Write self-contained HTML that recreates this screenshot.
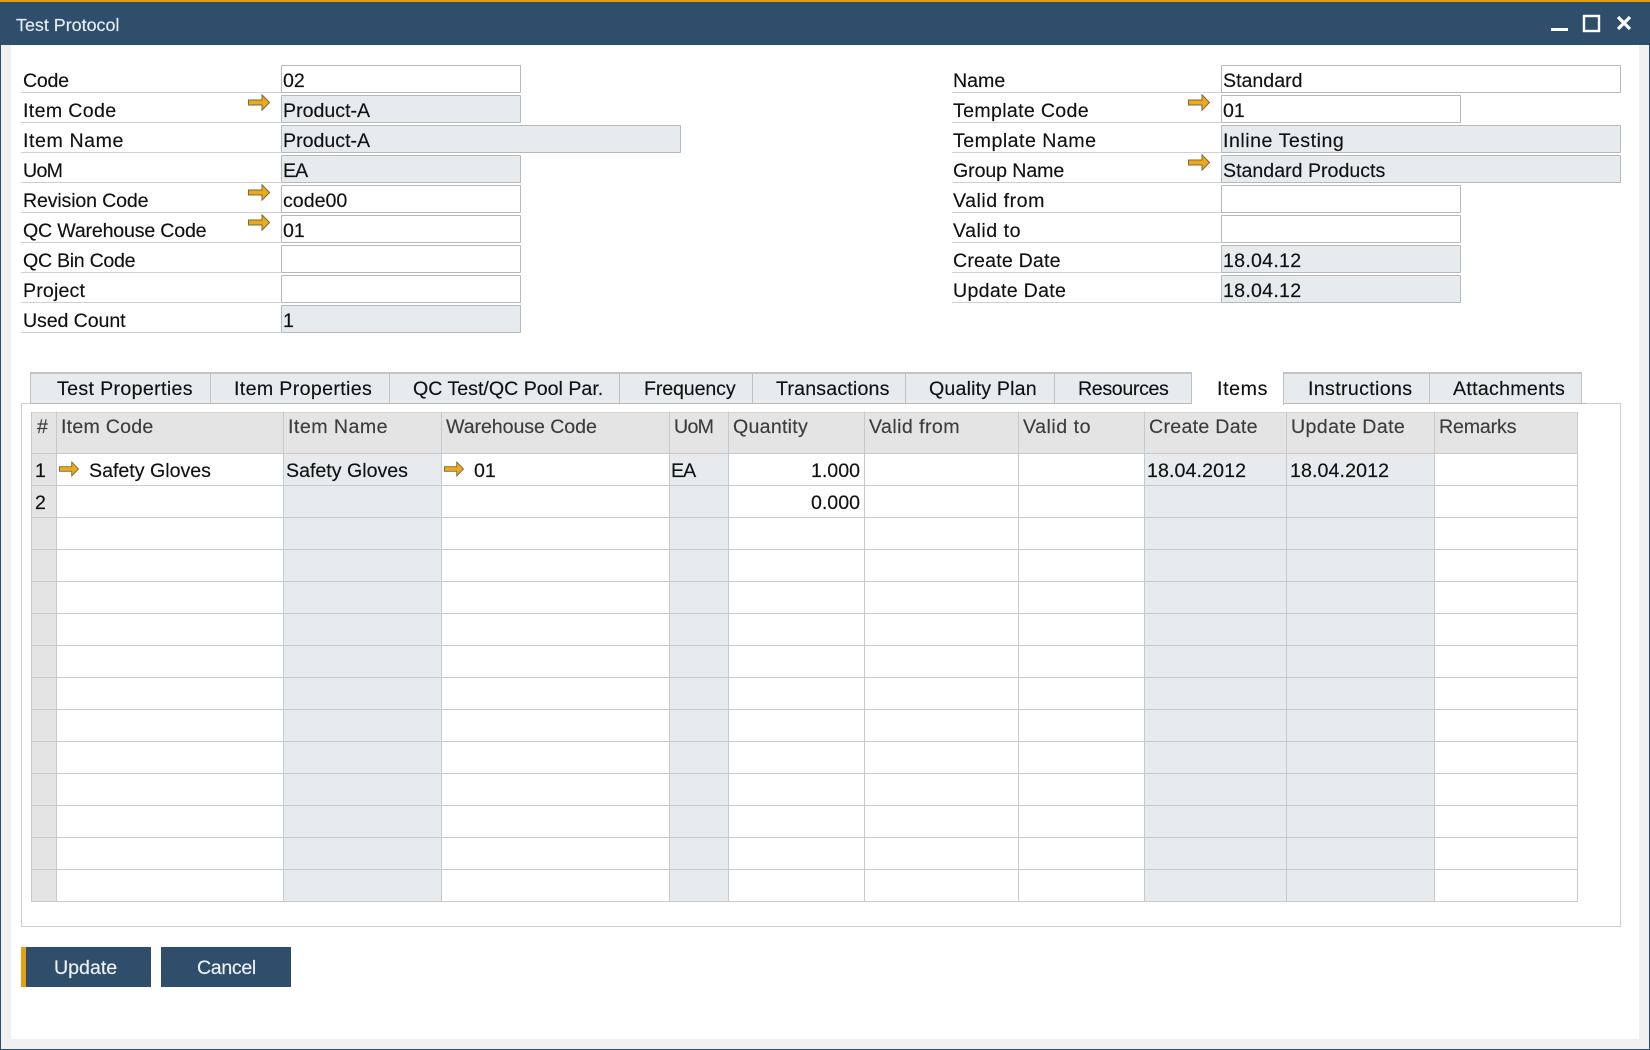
<!DOCTYPE html>
<html><head><meta charset="utf-8"><title>Test Protocol</title>
<style>
html,body{margin:0;padding:0;background:#fff}
#p{position:relative;width:1650px;height:1050px;overflow:hidden;background:#fff;font-family:"Liberation Sans",sans-serif;font-size:19.6px;color:#111}
#p div,#p span,#p svg{position:absolute}
.t{line-height:24px;white-space:nowrap;-webkit-text-stroke:.15px currentColor}
.l{height:1px;background:#cfcfcf}
.b{width:238px;height:26px;border:1px solid #b8b8b8;border-radius:1px;background:#fff;left:281px}
.g{background:#e8ebed}
.r{left:1221px}
.h{top:415px;color:#3c3c3c}
.v{top:412px;width:1px;height:490px;background:#c9c9c9}
.c{top:453px;height:448px;background:#e8ebed}
.tab{top:372px;height:31px;background:#e8ebed;border-top:2px solid #c4c4c4;border-right:1px solid #c2c2c2;box-sizing:border-box}
.a{width:22px;height:17px}
</style></head><body><div id="p">
<!-- frame -->
<div style="left:0;top:0;width:1650px;height:45px;background:#2e4e6c"></div>
<div style="left:0;top:0;width:1650px;height:2px;background:#e5a00d"></div>
<div style="left:0;top:45px;width:1px;height:1005px;background:#2e4e6c"></div>
<div style="left:1649px;top:45px;width:1px;height:1005px;background:#2e4e6c"></div>
<div style="left:0;top:1049px;width:1650px;height:1px;background:#2e4e6c"></div>
<div style="left:1px;top:45px;width:10px;height:1004px;background:#f0f0f0"></div>
<div style="left:1639px;top:45px;width:10px;height:1004px;background:#f0f0f0"></div>
<div style="left:1px;top:1039px;width:1648px;height:10px;background:#f0f0f0"></div>
<span class="t" style="left:16px;top:13px;font-size:17.9px;color:#e8edf2">Test Protocol</span>
<svg style="left:1545px;top:10px" width="95" height="26" viewBox="0 0 95 26"><rect x="6" y="18" width="17" height="3" fill="#fff"/><rect x="39" y="6" width="15" height="15" fill="none" stroke="#fff" stroke-width="2.4"/><path d="M73 7L85 19M85 7L73 19" stroke="#fff" stroke-width="3.200" fill="none"/></svg>

<!-- left form -->
<div class="l" style="left:21px;top:92px;width:260px"></div><div class="l" style="left:21px;top:122px;width:260px"></div><div class="l" style="left:21px;top:152px;width:260px"></div><div class="l" style="left:21px;top:182px;width:260px"></div><div class="l" style="left:21px;top:212px;width:260px"></div><div class="l" style="left:21px;top:242px;width:260px"></div><div class="l" style="left:21px;top:272px;width:260px"></div><div class="l" style="left:21px;top:302px;width:260px"></div><div class="l" style="left:21px;top:332px;width:260px"></div>
<span class="t" style="left:23px;top:69px;letter-spacing:-.26px">Code</span>
<span class="t" style="left:23px;top:99px;letter-spacing:.35px">Item Code</span>
<span class="t" style="left:23px;top:129px;letter-spacing:.58px">Item Name</span>
<span class="t" style="left:23px;top:159px;letter-spacing:-.7px">UoM</span>
<span class="t" style="left:23px;top:189px;letter-spacing:-.16px">Revision Code</span>
<span class="t" style="left:23px;top:219px;letter-spacing:-.19px">QC Warehouse Code</span>
<span class="t" style="left:23px;top:249px;letter-spacing:-.29px">QC Bin Code</span>
<span class="t" style="left:23px;top:279px;letter-spacing:.15px">Project</span>
<span class="t" style="left:23px;top:309px;letter-spacing:-.1px">Used Count</span>
<div class="b" style="top:65px"></div>
<div class="b g" style="top:95px"></div>
<div class="b g" style="top:125px;width:398px"></div>
<div class="b g" style="top:155px"></div>
<div class="b" style="top:185px"></div>
<div class="b" style="top:215px"></div>
<div class="b" style="top:245px"></div>
<div class="b" style="top:275px"></div>
<div class="b g" style="top:305px"></div>
<span class="t" style="left:283px;top:69px">02</span>
<span class="t" style="left:283px;top:99px">Product-A</span>
<span class="t" style="left:283px;top:129px">Product-A</span>
<span class="t" style="left:283px;top:159px;letter-spacing:-1px">EA</span>
<span class="t" style="left:283px;top:189px">code00</span>
<span class="t" style="left:283px;top:219px">01</span>
<span class="t" style="left:283px;top:309px">1</span>
<svg class="a" style="left:248px;top:94px" viewBox="0 0 22 17"><path d="M.5 6H14V.8L21.500 8.500 14 16.200V11H.5z" fill="#eca91c" stroke="#7d6a38" stroke-width="1"/></svg>
<svg class="a" style="left:248px;top:184px" viewBox="0 0 22 17"><path d="M.5 6H14V.8L21.500 8.500 14 16.200V11H.5z" fill="#eca91c" stroke="#7d6a38" stroke-width="1"/></svg>
<svg class="a" style="left:248px;top:214px" viewBox="0 0 22 17"><path d="M.5 6H14V.8L21.500 8.500 14 16.200V11H.5z" fill="#eca91c" stroke="#7d6a38" stroke-width="1"/></svg>

<!-- right form -->
<div class="l" style="left:952px;top:92px;width:269px"></div><div class="l" style="left:952px;top:122px;width:269px"></div><div class="l" style="left:952px;top:152px;width:269px"></div><div class="l" style="left:952px;top:182px;width:269px"></div><div class="l" style="left:952px;top:212px;width:269px"></div><div class="l" style="left:952px;top:242px;width:269px"></div><div class="l" style="left:952px;top:272px;width:269px"></div><div class="l" style="left:952px;top:302px;width:269px"></div>
<span class="t" style="left:953px;top:69px">Name</span>
<span class="t" style="left:953px;top:99px;letter-spacing:.32px">Template Code</span>
<span class="t" style="left:953px;top:129px;letter-spacing:.48px">Template Name</span>
<span class="t" style="left:953px;top:159px;letter-spacing:-.1px">Group Name</span>
<span class="t" style="left:953px;top:189px;letter-spacing:.52px">Valid from</span>
<span class="t" style="left:953px;top:219px;letter-spacing:.52px">Valid to</span>
<span class="t" style="left:953px;top:249px;letter-spacing:.19px">Create Date</span>
<span class="t" style="left:953px;top:279px;letter-spacing:.29px">Update Date</span>
<div class="b r" style="top:65px;width:398px"></div>
<div class="b r" style="top:95px"></div>
<div class="b r g" style="top:125px;width:398px"></div>
<div class="b r g" style="top:155px;width:398px"></div>
<div class="b r" style="top:185px"></div>
<div class="b r" style="top:215px"></div>
<div class="b r g" style="top:245px"></div>
<div class="b r g" style="top:275px"></div>
<span class="t" style="left:1223px;top:69px">Standard</span>
<span class="t" style="left:1223px;top:99px">01</span>
<span class="t" style="left:1223px;top:129px;letter-spacing:.52px">Inline Testing</span>
<span class="t" style="left:1223px;top:159px">Standard Products</span>
<span class="t" style="left:1223px;top:249px;letter-spacing:.26px">18.04.12</span>
<span class="t" style="left:1223px;top:279px;letter-spacing:.26px">18.04.12</span>
<svg class="a" style="left:1188px;top:94px" viewBox="0 0 22 17"><path d="M.5 6H14V.8L21.500 8.500 14 16.200V11H.5z" fill="#eca91c" stroke="#7d6a38" stroke-width="1"/></svg>
<svg class="a" style="left:1188px;top:154px" viewBox="0 0 22 17"><path d="M.5 6H14V.8L21.500 8.500 14 16.200V11H.5z" fill="#eca91c" stroke="#7d6a38" stroke-width="1"/></svg>

<!-- pane + tabs -->
<div style="left:21px;top:403px;width:1598px;height:522px;border:1px solid #cfcfcf"></div>
<div style="left:30px;top:403px;width:1557px;height:1px;background:#b8b8b8"></div>
<div class="tab" style="left:30px;width:181px;border-left:1px solid #c2c2c2"></div>
<div class="tab" style="left:211px;width:179px"></div>
<div class="tab" style="left:390px;width:230px"></div>
<div class="tab" style="left:620px;width:133px"></div>
<div class="tab" style="left:753px;width:153px"></div>
<div class="tab" style="left:906px;width:149px"></div>
<div class="tab" style="left:1055px;width:137px"></div>
<div class="tab" style="left:1192px;width:92px;height:33px;background:#fff;border-top:0;top:372px"></div>
<div class="tab" style="left:1284px;width:146px"></div>
<div class="tab" style="left:1430px;width:152px"></div>
<span class="t" style="left:57px;top:377px;letter-spacing:.35px">Test Properties</span>
<span class="t" style="left:234px;top:377px;letter-spacing:.35px">Item Properties</span>
<span class="t" style="left:413px;top:377px">QC Test/QC Pool Par.</span>
<span class="t" style="left:644px;top:377px;letter-spacing:-.12px">Frequency</span>
<span class="t" style="left:776px;top:377px;letter-spacing:.18px">Transactions</span>
<span class="t" style="left:929px;top:377px;letter-spacing:.18px">Quality Plan</span>
<span class="t" style="left:1078px;top:377px;letter-spacing:-.35px">Resources</span>
<span class="t" style="left:1217px;top:377px;letter-spacing:.63px">Items</span>
<span class="t" style="left:1308px;top:377px;letter-spacing:.35px">Instructions</span>
<span class="t" style="left:1453px;top:377px;letter-spacing:.29px">Attachments</span>

<!-- grid -->
<div style="left:31px;top:412px;width:1547px;height:41px;background:#e4e4e4"></div>
<div style="left:31px;top:453px;width:25px;height:448px;background:#e4e4e4"></div>
<div class="c" style="left:283px;width:158px"></div>
<div class="c" style="left:669px;width:59px"></div>
<div class="c" style="left:1144px;width:290px"></div>
<div style="left:31px;top:453px;width:1547px;height:449px;background:repeating-linear-gradient(to bottom,#c9c9c9 0,#c9c9c9 1px,transparent 1px,transparent 32px)"></div>
<div style="left:31px;top:412px;width:1547px;height:1px;background:#d4d4d4"></div>
<div class="v" style="left:31px"></div><div class="v" style="left:56px"></div><div class="v" style="left:283px"></div><div class="v" style="left:441px"></div><div class="v" style="left:669px"></div><div class="v" style="left:728px"></div><div class="v" style="left:864px"></div><div class="v" style="left:1018px"></div><div class="v" style="left:1144px"></div><div class="v" style="left:1286px"></div><div class="v" style="left:1434px"></div><div class="v" style="left:1577px"></div>
<span class="t h" style="left:37px">#</span>
<span class="t h" style="left:61px;letter-spacing:.23px">Item Code</span>
<span class="t h" style="left:288px;letter-spacing:.47px">Item Name</span>
<span class="t h" style="left:446px;letter-spacing:-.07px">Warehouse Code</span>
<span class="t h" style="left:674px;letter-spacing:-.7px">UoM</span>
<span class="t h" style="left:733px;letter-spacing:.26px">Quantity</span>
<span class="t h" style="left:869px;letter-spacing:.42px">Valid from</span>
<span class="t h" style="left:1023px;letter-spacing:.52px">Valid to</span>
<span class="t h" style="left:1149px;letter-spacing:.29px">Create Date</span>
<span class="t h" style="left:1291px;letter-spacing:.38px">Update Date</span>
<span class="t h" style="left:1439px;letter-spacing:-.15px">Remarks</span>
<span class="t" style="left:35px;top:459px">1</span>
<span class="t" style="left:35px;top:491px">2</span>
<svg class="a" style="left:59px;top:461px;width:20px;height:16px" viewBox="0 0 22 17"><path d="M.5 6H14V.8L21.500 8.500 14 16.200V11H.5z" fill="#eca91c" stroke="#7d6a38" stroke-width="1"/></svg>
<span class="t" style="left:89px;top:459px">Safety Gloves</span>
<span class="t" style="left:286px;top:459px">Safety Gloves</span>
<svg class="a" style="left:444px;top:461px;width:20px;height:16px" viewBox="0 0 22 17"><path d="M.5 6H14V.8L21.500 8.500 14 16.200V11H.5z" fill="#eca91c" stroke="#7d6a38" stroke-width="1"/></svg>
<span class="t" style="left:474px;top:459px">01</span>
<span class="t" style="left:671px;top:459px;letter-spacing:-1px">EA</span>
<span class="t" style="right:790px;top:459px">1.000</span>
<span class="t" style="right:790px;top:491px">0.000</span>
<span class="t" style="left:1147px;top:459px;letter-spacing:.1px">18.04.2012</span>
<span class="t" style="left:1290px;top:459px;letter-spacing:.1px">18.04.2012</span>

<!-- buttons -->
<div style="left:21px;top:947px;width:130px;height:40px;background:#2e4e6c"></div>
<div style="left:21px;top:947px;width:5px;height:40px;background:#e5a00d"></div>
<div style="left:161px;top:947px;width:130px;height:40px;background:#2e4e6c"></div>
<span class="t" style="left:54px;top:956px;color:#eef2f6">Update</span>
<span class="t" style="left:197px;top:956px;color:#eef2f6;letter-spacing:-.35px">Cancel</span>
</div></body></html>
